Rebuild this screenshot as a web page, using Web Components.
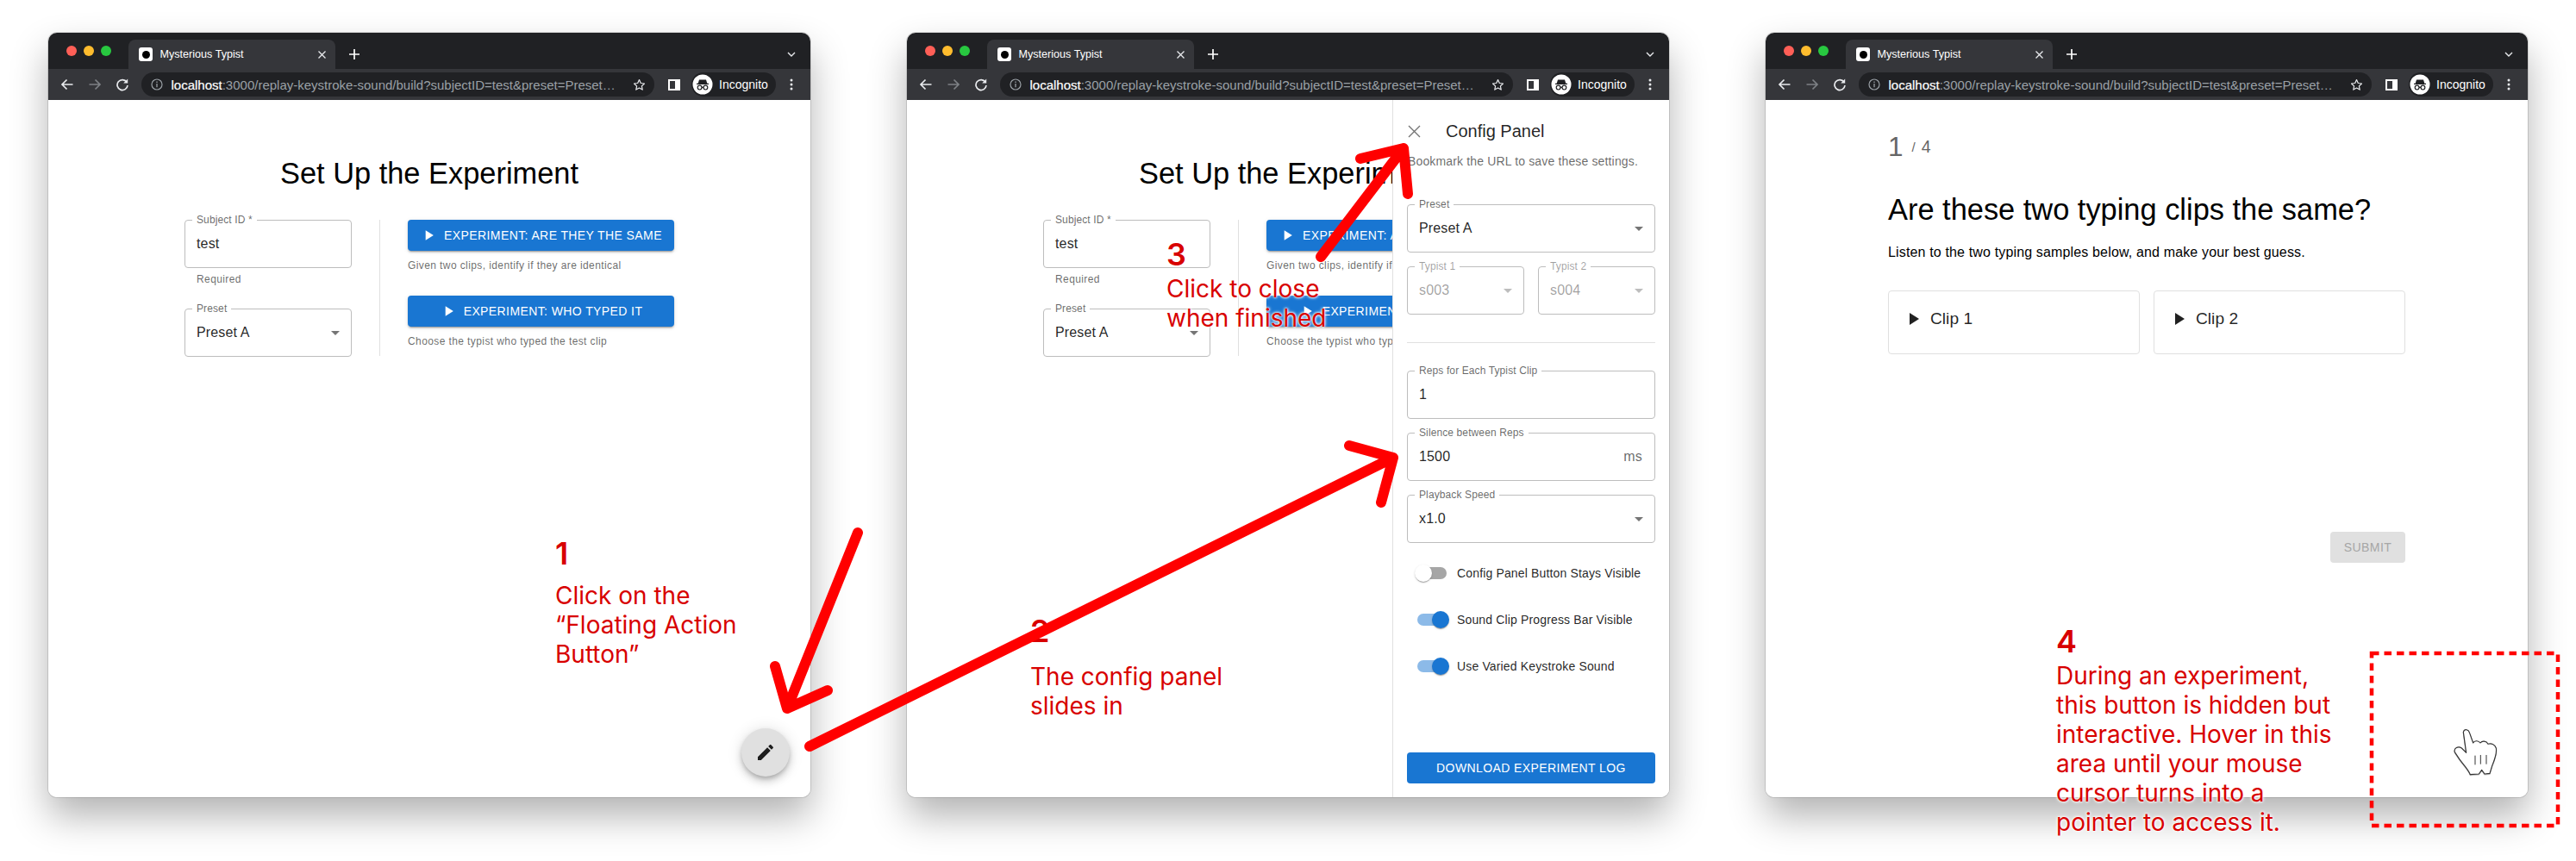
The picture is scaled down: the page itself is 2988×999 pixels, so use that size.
<!DOCTYPE html>
<html lang="en">
<head>
<meta charset="utf-8">
<title>Config panel walkthrough</title>
<style>
    html, body { margin: 0; padding: 0; background: #fff; }
    body { position: relative; width: 2988px; height: 999px; overflow: hidden; font-family: "Liberation Sans", sans-serif; }
    .desktop { display: flex; gap: 112px; padding: 38px 0 0 56px; }
</style>
</head>
<body>
<div class="desktop">
    <browser-window>
        <setup-screen></setup-screen>
        <fab-button></fab-button>
    </browser-window>
    <browser-window>
        <setup-screen></setup-screen>
        <config-panel></config-panel>
    </browser-window>
    <browser-window>
        <trial-screen></trial-screen>
    </browser-window>
</div>

<tutorial-note number="1" gap="15" style="left:644px;top:625px">Click on the<br>“Floating Action<br>Button”</tutorial-note>
<tutorial-note number="2" gap="19" style="left:1195px;top:715px">The config panel<br>slides in</tutorial-note>
<tutorial-note number="3" gap="6" style="left:1353px;top:278px">Click to close<br>when finished</tutorial-note>
<tutorial-note number="4" gap="6" style="left:2385px;top:727px">During an experiment,<br>this button is hidden but<br>interactive. Hover in this<br>area until your mouse<br>cursor turns into a<br>pointer to access it.</tutorial-note>
<tutorial-arrows></tutorial-arrows>

<script>
const ICONS = {
    play: 'M8 5v14l11-7z',
    drop: 'M7 10l5 5 5-5z',
    edit: 'M3 17.25V21h3.75L17.81 9.94l-3.75-3.75L3 17.25zM20.71 7.04c.39-.39.39-1.02 0-1.41l-2.34-2.34c-.39-.39-1.02-.39-1.41 0l-1.83 1.83 3.75 3.75 1.83-1.83z'
};

class BrowserWindow extends HTMLElement {
    constructor() {
        super();
        this.attachShadow({ mode: 'open' });
        this.shadowRoot.innerHTML = `
            <style>
                :host {
                    display: flex;
                    flex-direction: column;
                    width: 884px;
                    height: 887px;
                    border-radius: 10px;
                    overflow: hidden;
                    background: #fff;
                    box-shadow: 0 22px 44px rgba(0,0,0,.3), 0 0 0 1px rgba(0,0,0,.12);
                }
                .content { position: relative; flex: 1; min-height: 0; overflow: hidden; background: #fff; }
            </style>
            <browser-bar></browser-bar>
            <div class="content"><slot></slot></div>
        `;
    }
}

class BrowserBar extends HTMLElement {
    constructor() {
        super();
        this.attachShadow({ mode: 'open' });
        this.shadowRoot.innerHTML = `
            <style>
                :host { display: block; flex: none; font-family: "Liberation Sans", sans-serif; color: #fff; }
                .strip { display: flex; height: 42px; background: #202124; box-sizing: border-box; padding: 8px 0 0 21px; }
                .lights { display: flex; gap: 8px; padding-top: 7px; width: 72px; flex: none; }
                .lights i { width: 12px; height: 12px; border-radius: 50%; }
                .tab { flex: none; width: 240px; height: 34px; box-sizing: border-box; background: #35363a; border-radius: 8px 8px 0 0; display: flex; align-items: center; padding: 0 10px 0 12px; font-size: 12.6px; }
                .favicon { width: 16px; height: 16px; border-radius: 3px; background: #fff; display: flex; align-items: center; justify-content: center; margin-right: 8.5px; }
                .favicon b { width: 9px; height: 9px; border-radius: 50%; background: #000; }
                .tab span { flex: 1; }
                .plus { margin: 9px 0 0 14px; width: 16px; height: 16px; }
                .more { margin: 11px 0 0 auto; width: 12px; height: 12px; margin-right: 16px; }
                .tools { display: flex; align-items: center; height: 36px; background: #35363a; padding-left: 6px; }
                .btn { flex: none; width: 32px; height: 32px; display: flex; align-items: center; justify-content: center; }
                .url { flex: none; width: 595px; height: 28px; margin-left: 6px; box-sizing: border-box; padding: 0 10px 0 11px; border-radius: 14px; background: #202124; display: flex; align-items: center; font-size: 15px; white-space: nowrap; }
                .url .text { flex: 1; margin-left: 9.5px; color: #9aa0a6; }
                .url .text b { font-weight: 400; color: #fff; -webkit-text-stroke: .2px #fff; }
                .pill { flex: none; width: 98px; height: 28px; box-sizing: border-box; margin-left: 4px; border-radius: 14px; background: #202124; display: flex; align-items: center; padding-left: 1px; font-size: 14px; }
                .pill span { margin-left: 7.5px; }
            </style>
            <div class="strip">
                <div class="lights"><i style="background:#ff5f57"></i><i style="background:#febc2e"></i><i style="background:#28c840"></i></div>
                <div class="tab">
                    <div class="favicon"><b></b></div>
                    <span>Mysterious Typist</span>
                    <svg width="11" height="11" viewBox="0 0 11 11"><path d="M1.5 1.5l8 8M9.5 1.5l-8 8" stroke="#e8eaed" stroke-width="1.3" fill="none"/></svg>
                </div>
                <svg class="plus" viewBox="0 0 16 16"><path d="M8 2v12M2 8h12" stroke="#fff" stroke-width="1.7" fill="none"/></svg>
                <svg class="more" viewBox="0 0 12 12"><path d="M2 4l4 4 4-4" stroke="#e8eaed" stroke-width="1.4" fill="none"/></svg>
            </div>
            <div class="tools">
                <div class="btn"><svg width="16" height="16" viewBox="0 0 16 16"><path d="M14.5 8H2.5M7.5 2.5L2 8l5.5 5.5" stroke="#e8eaed" stroke-width="1.7" fill="none"/></svg></div>
                <div class="btn"><svg width="16" height="16" viewBox="0 0 16 16"><path d="M1.5 8h12M8.5 2.5L14 8l-5.5 5.5" stroke="#7d8085" stroke-width="1.7" fill="none"/></svg></div>
                <div class="btn"><svg width="16" height="16" viewBox="0 0 16 16"><path d="M13 5.2A6 6 0 1 0 14 9" stroke="#e8eaed" stroke-width="1.7" fill="none"/><path d="M14.2 1.5v5h-5z" fill="#e8eaed"/></svg></div>
                <div class="url">
                    <svg width="14" height="14" viewBox="0 0 14 14" style="flex:none"><circle cx="7" cy="7" r="6" stroke="#9aa0a6" stroke-width="1.2" fill="none"/><path d="M7 6v4.2M7 3.6v1.4" stroke="#9aa0a6" stroke-width="1.3"/></svg>
                    <div class="text"><b>localhost</b>:3000/replay-keystroke-sound/build?subjectID=test&amp;preset=Preset…</div>
                    <svg width="15" height="15" viewBox="0 0 15 15" style="flex:none"><path d="M7.5 1.6l1.8 3.9 4.2.5-3.1 2.9.8 4.2-3.7-2.1-3.7 2.1.8-4.2L1.5 6l4.2-.5z" stroke="#e8eaed" stroke-width="1.2" fill="none" stroke-linejoin="round"/></svg>
                </div>
                <div class="btn" style="margin-left:6.5px"><svg width="14" height="13" viewBox="0 0 14 13"><path d="M0 0h14v13H0zM2 2v9h6V2z" fill="#fff" fill-rule="evenodd"/></svg></div>
                <div class="pill">
                    <svg width="24" height="24" viewBox="0 0 24 24" style="flex:none"><circle cx="12" cy="12" r="11.5" fill="#fff"/><path d="M8 6.5h8l1.3 4.2H19v1.2H5v-1.2h1.7z" fill="#202124"/><circle cx="8.6" cy="15.6" r="2.4" fill="none" stroke="#202124" stroke-width="1.2"/><circle cx="15.4" cy="15.6" r="2.4" fill="none" stroke="#202124" stroke-width="1.2"/><path d="M11 15.4h2" stroke="#202124" stroke-width="1.2"/></svg>
                    <span>Incognito</span>
                </div>
                <div class="btn" style="margin-left:2.5px"><svg width="4" height="14" viewBox="0 0 4 14"><circle cx="2" cy="2" r="1.5" fill="#e8eaed"/><circle cx="2" cy="7" r="1.5" fill="#e8eaed"/><circle cx="2" cy="12" r="1.5" fill="#e8eaed"/></svg></div>
            </div>
        `;
    }
}

class MdField extends HTMLElement {
    constructor() {
        super();
        this.attachShadow({ mode: 'open' });
    }

    connectedCallback() {
        const label = this.getAttribute('label');
        const value = this.getAttribute('value');
        const suffix = this.getAttribute('suffix');
        const arrow = this.hasAttribute('select');
        this.shadowRoot.innerHTML = `
            <style>
                :host { display: block; position: relative; font-family: "Liberation Sans", sans-serif; }
                .box { height: 56px; box-sizing: border-box; border: 1px solid #bdbdbd; border-radius: 4px; display: flex; align-items: center; padding: 0 6px 0 13px; font-size: 16px; letter-spacing: .15px; color: rgba(0,0,0,.87); }
                .value { flex: 1; }
                .suffix { color: rgba(0,0,0,.6); margin-right: 8px; }
                svg { fill: #757575; flex: none; }
                label { position: absolute; left: 9px; top: -9px; padding: 0 5px; background: #fff; font-size: 12px; line-height: 18px; letter-spacing: .11px; color: rgba(0,0,0,.6); }
                :host([disabled]) .value, :host([disabled]) label { color: rgba(0,0,0,.38); }
                :host([disabled]) svg { fill: rgba(0,0,0,.26); }
            </style>
            <label>${label}</label>
            <div class="box">
                <span class="value">${value}</span>
                ${suffix ? `<span class="suffix">${suffix}</span>` : ''}
                ${arrow ? `<svg width="24" height="24" viewBox="0 0 24 24"><path d="${ICONS.drop}"/></svg>` : ''}
            </div>
        `;
    }
}

class MdButton extends HTMLElement {
    constructor() {
        super();
        this.attachShadow({ mode: 'open' });
    }

    connectedCallback() {
        const icon = this.hasAttribute('play')
            ? `<svg width="20" height="20" viewBox="0 0 24 24"><path d="${ICONS.play}" fill="#fff"/></svg>` : '';
        this.shadowRoot.innerHTML = `
            <style>
                :host { display: block; }
                .btn { height: 36px; box-sizing: border-box; display: flex; align-items: center; justify-content: center; gap: 8px; border-radius: 4px; background: #1976d2; color: #fff; font: 400 14px "Liberation Sans", sans-serif; letter-spacing: .4px; text-transform: uppercase; white-space: nowrap; box-shadow: 0 3px 1px -2px rgba(0,0,0,.2), 0 2px 2px 0 rgba(0,0,0,.14), 0 1px 5px 0 rgba(0,0,0,.12); }
                :host([flat]) .btn { box-shadow: none; }
                :host([disabled]) .btn { background: #e0e0e0; color: #a6a6a6; box-shadow: none; }
            </style>
            <div class="btn">${icon}<slot></slot></div>
        `;
    }
}

class MdSwitch extends HTMLElement {
    constructor() {
        super();
        this.attachShadow({ mode: 'open' });
        this.shadowRoot.innerHTML = `
            <style>
                :host { display: flex; align-items: center; height: 54px; padding-left: 12px; font: 14px "Liberation Sans", sans-serif; letter-spacing: .15px; color: rgba(0,0,0,.87); }
                .track { position: relative; flex: none; width: 34px; height: 14px; border-radius: 7px; background: #a6a6a6; margin-right: 12px; }
                .thumb { position: absolute; left: -3px; top: -3px; width: 20px; height: 20px; border-radius: 50%; background: #fff; box-shadow: 0 2px 1px -1px rgba(0,0,0,.2), 0 1px 1px 0 rgba(0,0,0,.14), 0 1px 3px 0 rgba(0,0,0,.12); }
                :host([on]) .track { background: #8cbae8; }
                :host([on]) .thumb { left: 17px; background: #1976d2; }
            </style>
            <div class="track"><div class="thumb"></div></div>
            <slot></slot>
        `;
    }
}

class SetupScreen extends HTMLElement {
    constructor() {
        super();
        this.attachShadow({ mode: 'open' });
        this.shadowRoot.innerHTML = `
            <style>
                :host { display: block; padding-top: 65px; font-family: "Liberation Sans", sans-serif; }
                h1 { margin: 0 0 34px; font: 400 34.4px/40px "Liberation Sans", sans-serif; text-align: center; color: #000; }
                .row { display: flex; margin-left: 158px; }
                .left { width: 194px; flex: none; }
                .help { margin: 3px 0 24px 14px; font-size: 12px; line-height: 20px; letter-spacing: .4px; color: rgba(0,0,0,.6); }
                .rule { width: 1px; height: 158px; margin: 0 32px; background: #e0e0e0; flex: none; }
                .right { width: 309px; flex: none; }
                .cap { margin: 8px 0 26px; font-size: 12px; line-height: 18px; letter-spacing: .4px; color: rgba(0,0,0,.6); }
            </style>
            <h1>Set Up the Experiment</h1>
            <div class="row">
                <div class="left">
                    <md-field label="Subject ID *" value="test"></md-field>
                    <div class="help">Required</div>
                    <md-field label="Preset" value="Preset A" select></md-field>
                </div>
                <div class="rule"></div>
                <div class="right">
                    <md-button play>Experiment: are they the same</md-button>
                    <div class="cap">Given two clips, identify if they are identical</div>
                    <md-button play>Experiment: who typed it</md-button>
                    <div class="cap">Choose the typist who typed the test clip</div>
                </div>
            </div>
        `;
    }
}

class ConfigPanel extends HTMLElement {
    constructor() {
        super();
        this.attachShadow({ mode: 'open' });
        this.shadowRoot.innerHTML = `
            <style>
                :host { position: absolute; top: 0; right: 0; bottom: 0; width: 321px; box-sizing: border-box; border-left: 1px solid #e0e0e0; background: #fff; padding: 24px 16px 16px; display: flex; flex-direction: column; font-family: "Liberation Sans", sans-serif; }
                header { display: flex; align-items: center; gap: 29px; height: 24px; padding-left: 1px; }
                h2 { margin: 0; font-size: 20px; font-weight: 400; color: rgba(0,0,0,.87); }
                p { margin: 13px 0 40px 1px; font-size: 14px; line-height: 20px; letter-spacing: .15px; color: rgba(0,0,0,.6); white-space: nowrap; }
                .pair { display: flex; gap: 16px; margin-top: 16px; }
                .pair md-field { flex: 1; }
                hr { border: 0; height: 1px; background: #e0e0e0; margin: 32px 0; }
                .gap { margin-top: 16px; }
                .toggles { margin-top: 8px; }
                md-button { margin-top: auto; }
            </style>
            <header>
                <svg width="15" height="15" viewBox="0 0 15 15"><path d="M1 1l13 13M14 1L1 14" stroke="#757575" stroke-width="1.4" fill="none"/></svg>
                <h2>Config Panel</h2>
            </header>
            <p>Bookmark the URL to save these settings.</p>
            <md-field label="Preset" value="Preset A" select></md-field>
            <div class="pair">
                <md-field label="Typist 1" value="s003" select disabled></md-field>
                <md-field label="Typist 2" value="s004" select disabled></md-field>
            </div>
            <hr>
            <md-field label="Reps for Each Typist Clip" value="1"></md-field>
            <md-field class="gap" label="Silence between Reps" value="1500" suffix="ms"></md-field>
            <md-field class="gap" label="Playback Speed" value="x1.0" select></md-field>
            <div class="toggles">
                <md-switch>Config Panel Button Stays Visible</md-switch>
                <md-switch on>Sound Clip Progress Bar Visible</md-switch>
                <md-switch on>Use Varied Keystroke Sound</md-switch>
            </div>
            <md-button flat>Download experiment log</md-button>
        `;
    }
}

class TrialScreen extends HTMLElement {
    constructor() {
        super();
        this.attachShadow({ mode: 'open' });
        this.shadowRoot.innerHTML = `
            <style>
                :host { display: block; width: 600px; margin-left: 142px; padding-top: 36px; font-family: "Liberation Sans", sans-serif; }
                .progress { display: flex; align-items: center; height: 36px; color: #666; }
                .now { font-size: 31.5px; }
                .slash { font-size: 15px; margin-left: 10px; }
                .total { font-size: 19.5px; margin-left: 7px; }
                h1 { margin: 35px 0 18px; font: 400 34.4px/40px "Liberation Sans", sans-serif; color: #000; }
                p { margin: 0 0 32px; font-size: 16px; line-height: 24px; letter-spacing: .15px; color: #000; }
                .clips { display: flex; gap: 16px; }
                .clip { flex: 1; height: 74px; box-sizing: border-box; border: 1px solid #e0e0e0; border-radius: 4px; display: flex; align-items: flex-start; gap: 8px; padding: 20px 16px; font: 19.2px/24px "Liberation Sans", sans-serif; color: rgba(0,0,0,.87); }
                .clip svg { flex: none; fill: rgba(0,0,0,.87); }
                md-button { width: 87px; margin: 206px 0 0 auto; }
            </style>
            <div class="progress"><span class="now">1</span><span class="slash">/</span><span class="total">4</span></div>
            <h1>Are these two typing clips the same?</h1>
            <p>Listen to the two typing samples below, and make your best guess.</p>
            <div class="clips">
                <div class="clip"><svg width="24" height="24" viewBox="0 0 24 24"><path d="${ICONS.play}"/></svg>Clip 1</div>
                <div class="clip"><svg width="24" height="24" viewBox="0 0 24 24"><path d="${ICONS.play}"/></svg>Clip 2</div>
            </div>
            <md-button disabled flat>Submit</md-button>
        `;
    }
}

class FabButton extends HTMLElement {
    constructor() {
        super();
        this.attachShadow({ mode: 'open' });
        this.shadowRoot.innerHTML = `
            <style>
                :host { position: absolute; right: 24px; bottom: 24px; width: 56px; height: 56px; border-radius: 50%; background: #e0e0e0; display: flex; align-items: center; justify-content: center; box-shadow: 0 3px 5px -1px rgba(0,0,0,.2), 0 6px 10px 0 rgba(0,0,0,.14), 0 1px 18px 0 rgba(0,0,0,.12); }
            </style>
            <svg width="24" height="24" viewBox="0 0 24 24"><path d="${ICONS.edit}" fill="rgba(0,0,0,.87)"/></svg>
        `;
    }
}

class TutorialNote extends HTMLElement {
    constructor() {
        super();
        this.attachShadow({ mode: 'open' });
    }

    connectedCallback() {
        this.shadowRoot.innerHTML = `
            <style>
                :host { position: absolute; z-index: 2; font-family: Inter, sans-serif; color: #d80000; white-space: nowrap; text-shadow: 0 0 2px #fff, 0 0 3px #fff, 0 0 4px #fff; }
                .num { font-size: 36px; font-weight: 600; line-height: 34px; margin-bottom: ${this.getAttribute('gap')}px; }
                .text { font-size: 28px; line-height: 34px; }
            </style>
            <div class="num">${this.getAttribute('number')}</div>
            <div class="text"><slot></slot></div>
        `;
    }
}

class TutorialArrows extends HTMLElement {
    constructor() {
        super();
        this.attachShadow({ mode: 'open' });
        this.shadowRoot.innerHTML = `
            <style>
                :host { position: absolute; inset: 0; z-index: 3; pointer-events: none; }
                svg { display: block; }
                .arrow { fill: none; stroke: #f00; stroke-width: 12; stroke-linecap: round; stroke-linejoin: round; }
                .hand { filter: drop-shadow(0 2px 2px rgba(0,0,0,.35)); }
            </style>
            <svg width="2988" height="999" viewBox="0 0 2988 999">
                <path class="arrow" d="M995 618L913 822M899 773L913 822L960 801"/>
                <path class="arrow" d="M939 866L1616 531M1565 517L1616 531L1602 583"/>
                <path class="arrow" d="M1532 298L1628 172M1578 184L1628 172L1633 225"/>
                <rect x="2751" y="758" width="216" height="200" fill="none" stroke="#f00" stroke-width="4.5" stroke-dasharray="8.5 6"/>
                <g class="hand" transform="translate(2820 830) scale(.3333)">
                    <path d="M112 58C116 46 130 48 134 62L146 96C150 88 164 86 171 96C177 88 192 88 198 100C208 96 222 100 226 114C230 134 218 160 212 176L204 202L186 204L176 190L166 204L136 206C128 186 112 172 98 152L82 128C78 114 94 106 106 114L122 130Z" fill="#fff" stroke="#333" stroke-width="3.5" stroke-linejoin="round"/>
                    <path d="M153 140V172M172 138V170M192 138V170" fill="none" stroke="#333" stroke-width="3"/>
                </g>
            </svg>
        `;
    }
}

customElements.define('browser-bar', BrowserBar);
customElements.define('browser-window', BrowserWindow);
customElements.define('md-field', MdField);
customElements.define('md-button', MdButton);
customElements.define('md-switch', MdSwitch);
customElements.define('setup-screen', SetupScreen);
customElements.define('config-panel', ConfigPanel);
customElements.define('trial-screen', TrialScreen);
customElements.define('fab-button', FabButton);
customElements.define('tutorial-note', TutorialNote);
customElements.define('tutorial-arrows', TutorialArrows);
</script>
</body>
</html>
